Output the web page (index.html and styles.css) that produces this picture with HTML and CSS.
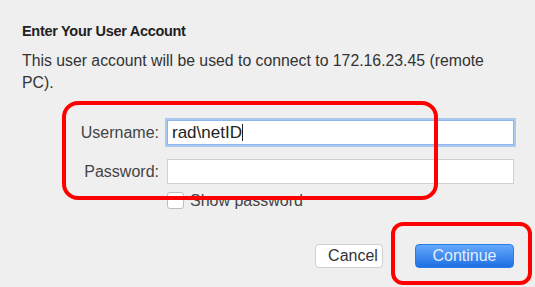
FILE: index.html
```html
<!DOCTYPE html>
<html lang="en">
<head>
	<meta charset="UTF-8">
	<title>Enter Your User Account</title>
	<link rel="stylesheet" href="styles.css">
</head>
<body>
	<!-- 对话框 -->
	<div class="dialog">
		<h1 class="title">Enter Your User Account</h1>
		<p class="desc">This user account will be used to connect to 172.16.23.45 (remote PC).</p>

		<!-- 表单 -->
		<div class="form">
			<label class="label">Username:</label>
			<div class="field focus">rad\netID<span class="caret"></span></div>

			<label class="label">Password:</label>
			<div class="field"></div>

			<span></span>
			<div class="check">
				<span class="box"></span>
				<span>Show password</span>
			</div>
		</div>

		<!-- 按钮 -->
		<div class="buttons">
			<button class="btn">Cancel</button>
			<button class="btn primary">Continue</button>
		</div>

		<!-- 红色标注框 -->
		<div class="mark mark-form"></div>
		<div class="mark mark-btn"></div>
	</div>
</body>
</html>
```

FILE: styles.css
```css
*{
	margin: 0;
	padding: 0;
	box-sizing: border-box;
}

body{
	width: 535px;
	height: 287px;
	overflow: hidden;
	background-color: #efefef;
	font-family: "Liberation Sans", Arial, sans-serif;
	color: #2a2a2a;
}

.dialog{
	position: relative;
	height: 287px;
	padding: 22px 20px 0 22px;
}

.title{
	font-size: 14.5px;
	font-weight: bold;
	letter-spacing: -0.3px;
	line-height: 18px;
	color: #222;
}

.desc{
	margin-top: 10px;
	font-size: 15.8px;
	line-height: 22px;
	color: #333;
	width: 490px;
}

/*表单网格*/
.form{
	display: grid;
	grid-template-columns: 137px 347px;
	column-gap: 8px;
	row-gap: 14px;
	margin-top: 26px;
	align-items: center;
}

.label{
	text-align: right;
	font-size: 16px;
	color: #444;
}

.field{
	height: 25px;
	background-color: #fff;
	border: 1px solid #cfcfcf;
	font-size: 17px;
	line-height: 23px;
	padding-left: 4px;
	color: #222;
}

.field.focus{
	border-color: #8fb6e8;
	box-shadow: 0 0 0 2px #a9c9f1;
}

.caret{
	display: inline-block;
	width: 1px;
	height: 17px;
	background-color: #222;
	vertical-align: -3px;
}

.check{
	display: flex;
	align-items: center;
	gap: 6px;
	font-size: 16px;
	color: #444;
	margin-top: -6px;
	height: 17px;
}

.box{
	width: 17px;
	height: 17px;
	background-color: #fff;
	border: 1px solid #bdbdbd;
	border-radius: 3px;
}

/*按钮*/
.buttons{
	display: flex;
	justify-content: flex-end;
	gap: 32px;
	margin-top: 35px;
	padding-right: 1px;
}

.btn{
	height: 24px;
	font-family: inherit;
	font-size: 16px;
	border-radius: 4px;
	border: 1px solid #cfcfcf;
	background-color: #fff;
	color: #333;
	width: 68px;
	padding-left: 8px;
}

.btn.primary{
	width: 99px;
	padding-left: 0;
	border-color: #2c7ce6;
	background: linear-gradient(#64a9fb, #1f6fe5);
	color: #e3eeff;
}

/*红色标注*/
.mark{
	position: absolute;
	border: 4px solid #f00;
	border-radius: 16px;
}

.mark-form{
	left: 62px;
	top: 101px;
	width: 376px;
	height: 99px;
}

.mark-btn{
	left: 391px;
	top: 222px;
	width: 141px;
	height: 63px;
	border-radius: 12px;
}
```
